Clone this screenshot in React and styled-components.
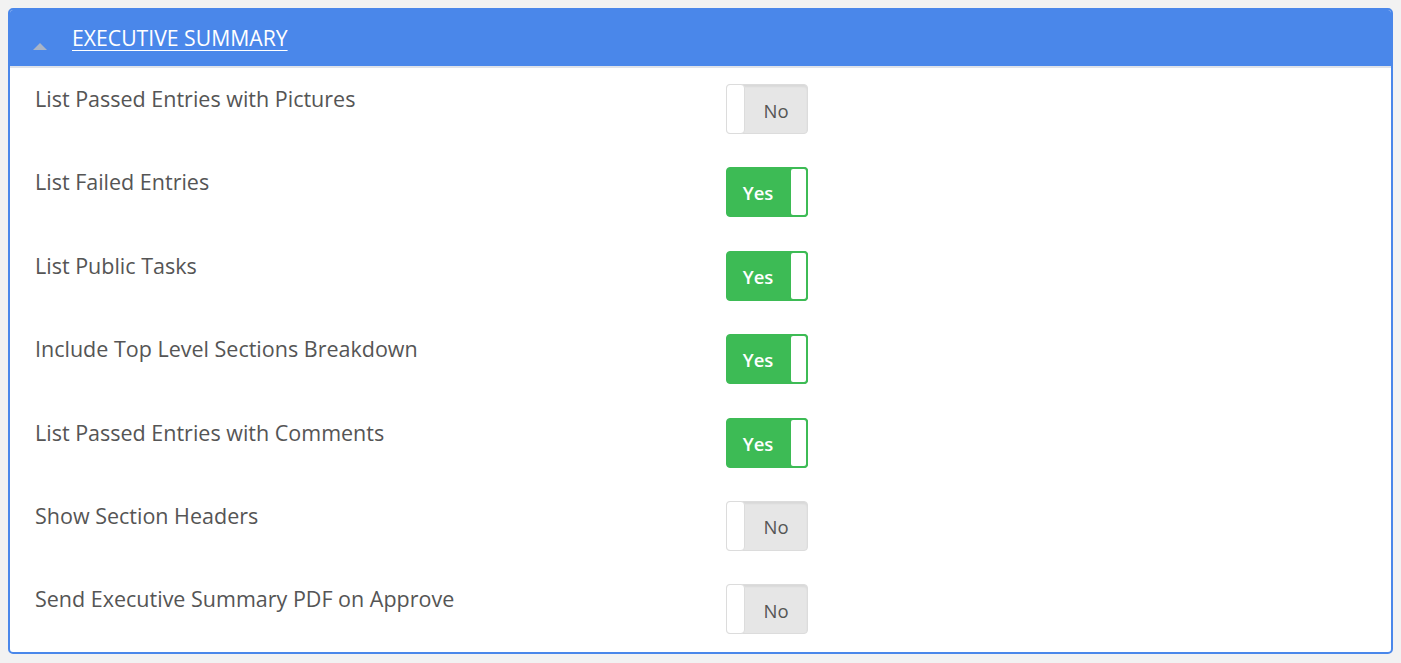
import React, { useState } from 'react'
import styled, { createGlobalStyle } from 'styled-components'

const GlobalStyle = createGlobalStyle`
  html, body {
    margin: 0;
    padding: 0;
    background: #f2f2f2;
    font-family: "Open Sans", "Liberation Sans", sans-serif;
  }
`

const options = [
  { label: 'List Passed Entries with Pictures', on: false },
  { label: 'List Failed Entries', on: true },
  { label: 'List Public Tasks', on: true },
  { label: 'Include Top Level Sections Breakdown', on: true },
  { label: 'List Passed Entries with Comments', on: true },
  { label: 'Show Section Headers', on: false },
  { label: 'Send Executive Summary PDF on Approve', on: false },
]

const App = () => {
  const [values, setValues] = useState(options.map(o => o.on))

  const flip = i => setValues(v => v.map((x, j) => (j === i ? !x : x)))

  return (
    <Page>
      <GlobalStyle />
      <Panel>
        <Header>
          <Caret />
          <Title href="#">EXECUTIVE SUMMARY</Title>
        </Header>
        <Body>
          {options.map((o, i) => (
            <Row key={o.label}>
              <Label>{o.label}</Label>
              <Toggle $on={values[i]} onClick={() => flip(i)}>
                {values[i] ? 'Yes' : 'No'}
                <Knob $on={values[i]} />
              </Toggle>
            </Row>
          ))}
        </Body>
      </Panel>
    </Page>
  )
}

export default App

const Page = styled.div`
  padding: 8px 8px 10px 8px;
`

const Panel = styled.div`
  border: 2px solid #4a87ea;
  border-radius: 5px;
  background: #fff;
  overflow: hidden;
`

const Header = styled.div`
  height: 56px;
  background: #4a87ea;
  border-bottom: 2px solid #dfe3ea;
  display: flex;
  align-items: center;
  padding-left: 23px;
`

const Caret = styled.span`
  width: 0;
  height: 0;
  border-left: 7.5px solid transparent;
  border-right: 7.5px solid transparent;
  border-bottom: 7px solid #a9b4c6;
  margin-top: 16px;
  margin-right: 25px;
`

const Title = styled.a`
  color: #fff;
  font-size: 21.2px;
  text-decoration: underline;
  text-underline-offset: 4px;
  text-decoration-thickness: 1px;
  margin-top: -2px;
`

const Body = styled.div`
  padding: 0 25px;
`

const Row = styled.div`
  height: 83.4px;
  display: grid;
  grid-template-columns: 691px 82px;
  align-items: start;
`

const Label = styled.div`
  font-size: 21.5px;
  line-height: 24px;
  color: #555;
  padding-top: 19px;
`

const Toggle = styled.div`
  position: relative;
  margin-top: 16px;
  width: 82px;
  height: 50px;
  box-sizing: border-box;
  border-radius: 4px;
  border: 1px solid ${p => (p.$on ? '#3dbb55' : '#dcdcdc')};
  background: ${p => (p.$on ? '#3dbb55' : '#e6e6e6')};
  box-shadow: ${p => (p.$on ? 'none' : 'inset 0 2px 2px rgba(0,0,0,0.06)')};
  color: ${p => (p.$on ? '#fff' : '#555')};
  font-size: 18.5px;
  font-weight: ${p => (p.$on ? 600 : 400)};
  display: flex;
  align-items: center;
  justify-content: center;
  padding: ${p => (p.$on ? '1px 18px 0 0' : '2px 0 0 18px')};
  cursor: pointer;
  user-select: none;
`

const Knob = styled.span`
  position: absolute;
  top: -1px;
  bottom: -1px;
  ${p => (p.$on ? 'right: -1px;' : 'left: -1px;')}
  width: 19px;
  box-sizing: border-box;
  background: #fff;
  border: ${p => (p.$on ? '2px solid #3dbb55' : '1px solid #dcdcdc')};
  border-radius: 4px;
`
